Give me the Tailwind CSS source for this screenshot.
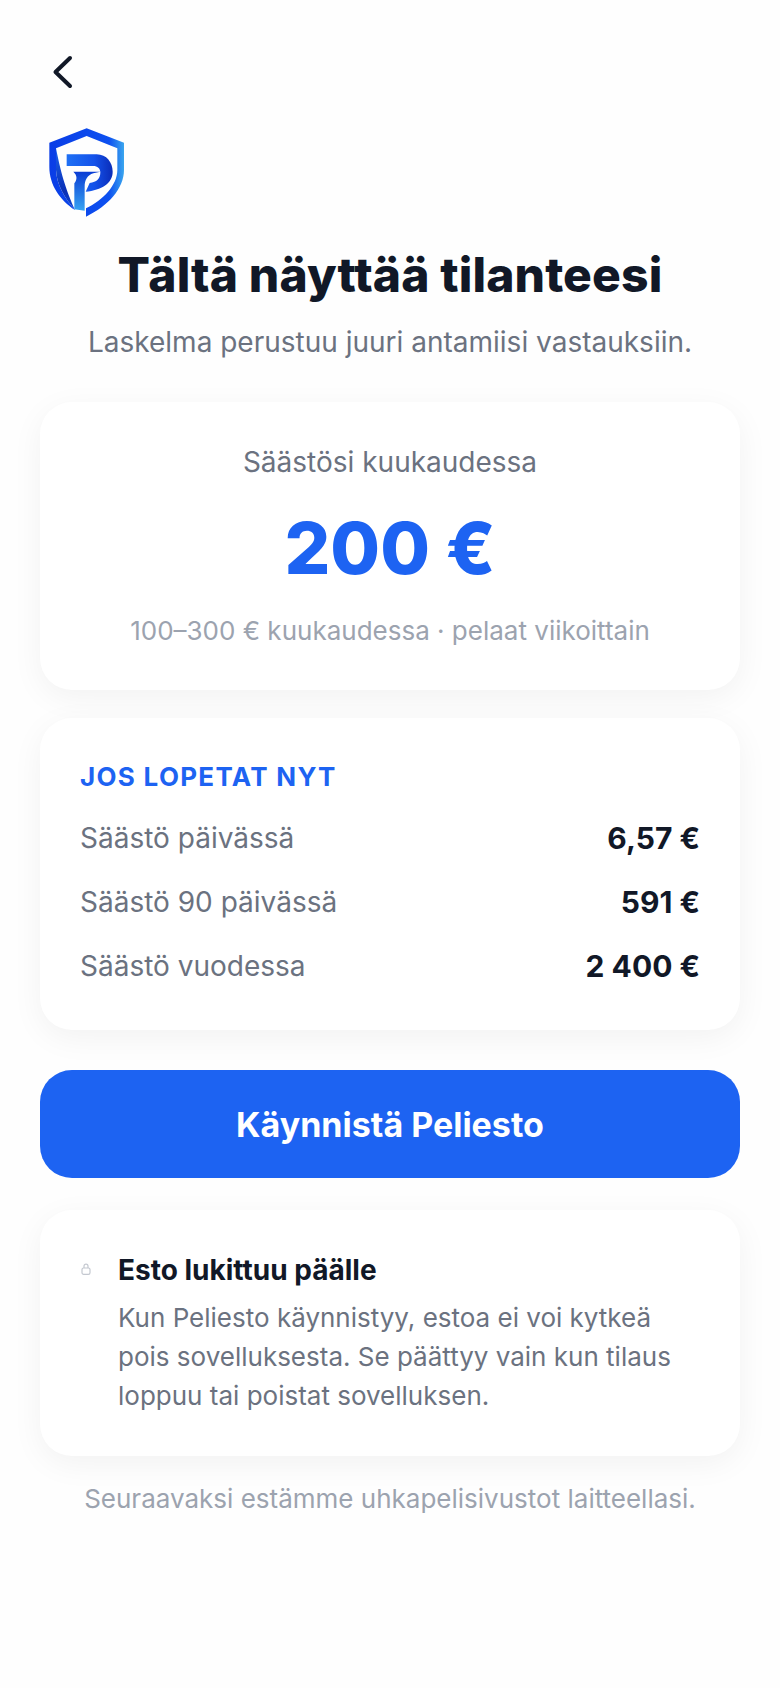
<!doctype html>
<html><head><meta charset="utf-8"><script src="https://cdn.jsdelivr.net/npm/@tailwindcss/browser@4"></script></head>
<body class="bg-white">
<div class="w-[780px] h-[1688px] bg-[#fefefe] font-['Inter',sans-serif] px-[40px] flex flex-col overflow-hidden">
  <div class="h-[128px] pt-[52px] pl-[8px] shrink-0">
    <svg class="w-[32px] h-[40px]" viewBox="0 0 32 40" fill="none"><path d="M22 6 L7.5 20 L22 34" stroke="#111827" stroke-width="4" stroke-linecap="round" stroke-linejoin="round"/></svg>
  </div>
  <svg class="w-[78px] h-[90px] ml-[8px] shrink-0" viewBox="24 24 234 270">
    <defs>
      <linearGradient id="a" x1="0" y1="0" x2="1" y2="0"><stop offset="0" stop-color="#0a3de6"/><stop offset=".8" stop-color="#0d50f0"/><stop offset="1" stop-color="#3aa6ee"/></linearGradient>
      <linearGradient id="b" x1="0" y1="0" x2="1" y2="0"><stop offset="0" stop-color="#1f70f4"/><stop offset=".6" stop-color="#1452ea"/><stop offset="1" stop-color="#0a2cb8"/></linearGradient>
      <linearGradient id="c" x1="0" y1="0" x2="0" y2="1"><stop offset="0" stop-color="#0a3cd4"/><stop offset="1" stop-color="#38a4f2"/></linearGradient>
      <linearGradient id="d" x1="0" y1="0" x2="0" y2="1"><stop offset="0" stop-color="#1a62f0"/><stop offset=".7" stop-color="#0a2fb4"/><stop offset="1" stop-color="#0d46d8"/></linearGradient>
    </defs>
    <path d="M140 25 L252 68 V150 C252 205 205 258 138 290 V265 C190 240 232 195 232 150 V85 L140 48 L48 85 V150 C50 195 75 235 105 270 C60 240 28 195 28 140 V68 Z" fill="url(#a)"/>
    <path d="M48 85 V150 C50 195 75 235 105 270 C80 215 65 170 48 85 Z" fill="url(#d)"/>
    <path d="M80 103 H170 C200 103 218 128 218 155 C218 190 185 210 137 215 L149 189 C170 187 181 176 181 157 C181 145 172 138 160 138 H80 Z" fill="url(#b)"/>
    <path d="M100 155 H181 L160 160 C142 166 134 180 134 200 V272 L103 268 V190 C112 178 112 166 100 155 Z" fill="url(#c)"/>
  </svg>
  <h1 class="mt-[27px] text-center text-[48px] leading-[60px] font-extrabold tracking-[0.13px] text-[#111827]">Tältä näyttää tilanteesi</h1>
  <p class="mt-[17px] text-center text-[28px] leading-[40px] text-[#6b7280]">Laskelma perustuu juuri antamiisi vastauksiin.</p>

  <section class="mt-[40px] h-[288px] shrink-0 rounded-[32px] bg-white shadow-[0_8px_32px_rgba(0,0,0,0.05)] flex flex-col items-center pt-[40px]">
    <p class="text-[28px] leading-[40px] text-[#6b7280]">Säästösi kuukaudessa</p>
    <p class="mt-[26px] text-[72px] leading-[80px] font-extrabold text-[#1d63f2]">200 €</p>
    <p class="mt-[23px] text-[26px] leading-[40px] text-[#9ca3af]">100–300 € kuukaudessa · pelaat viikoittain</p>
  </section>

  <section class="mt-[28px] h-[312px] shrink-0 rounded-[32px] bg-white shadow-[0_8px_32px_rgba(0,0,0,0.05)] px-[40px] pt-[43px]">
    <p class="text-[26px] leading-[32px] font-bold tracking-[1.3px] text-[#1d63f2]">JOS LOPETAT NYT</p>
    <div class="mt-[25px] flex flex-col gap-[24px]">
      <div class="flex justify-between items-center h-[40px]"><span class="text-[28px] text-[#6b7280]">Säästö päivässä</span><span class="text-[30px] font-bold text-[#111827]">6,57 €</span></div>
      <div class="flex justify-between items-center h-[40px]"><span class="text-[28px] text-[#6b7280]">Säästö 90 päivässä</span><span class="text-[30px] font-bold text-[#111827]">591 €</span></div>
      <div class="flex justify-between items-center h-[40px]"><span class="text-[28px] text-[#6b7280]">Säästö vuodessa</span><span class="text-[30px] font-bold text-[#111827]">2 400 €</span></div>
    </div>
  </section>

  <button class="mt-[40px] h-[108px] rounded-[32px] bg-[#1d63f2] text-white text-[34px] font-bold shrink-0">Käynnistä Peliesto</button>

  <section class="mt-[32px] h-[246px] shrink-0 rounded-[32px] bg-white shadow-[0_8px_32px_rgba(0,0,0,0.05)] pl-[40px] pr-[40px] pt-[40px] flex gap-[26px]">
    <svg class="w-[12px] h-[12px] mt-[13px] shrink-0" viewBox="0 0 12 12" fill="none" stroke="#c4c8d0" stroke-width="1.2"><rect x="2" y="5" width="8" height="6.4" rx="1.6"/><path d="M4 5 V3.2 a2 2 0 0 1 4 0 V5"/></svg>
    <div>
      <p class="text-[28px] leading-[40px] font-bold text-[#111827]">Esto lukittuu päälle</p>
      <p class="mt-[8px] text-[26px] leading-[39px] text-[#6b7280]">Kun Peliesto käynnistyy, estoa ei voi kytkeä pois sovelluksesta. Se päättyy vain kun tilaus loppuu tai poistat sovelluksen.</p>
    </div>
  </section>

  <p class="mt-[23px] text-center text-[26px] leading-[40px] text-[#9ca3af]">Seuraavaksi estämme uhkapelisivustot laitteellasi.</p>
</div>
</body></html>
